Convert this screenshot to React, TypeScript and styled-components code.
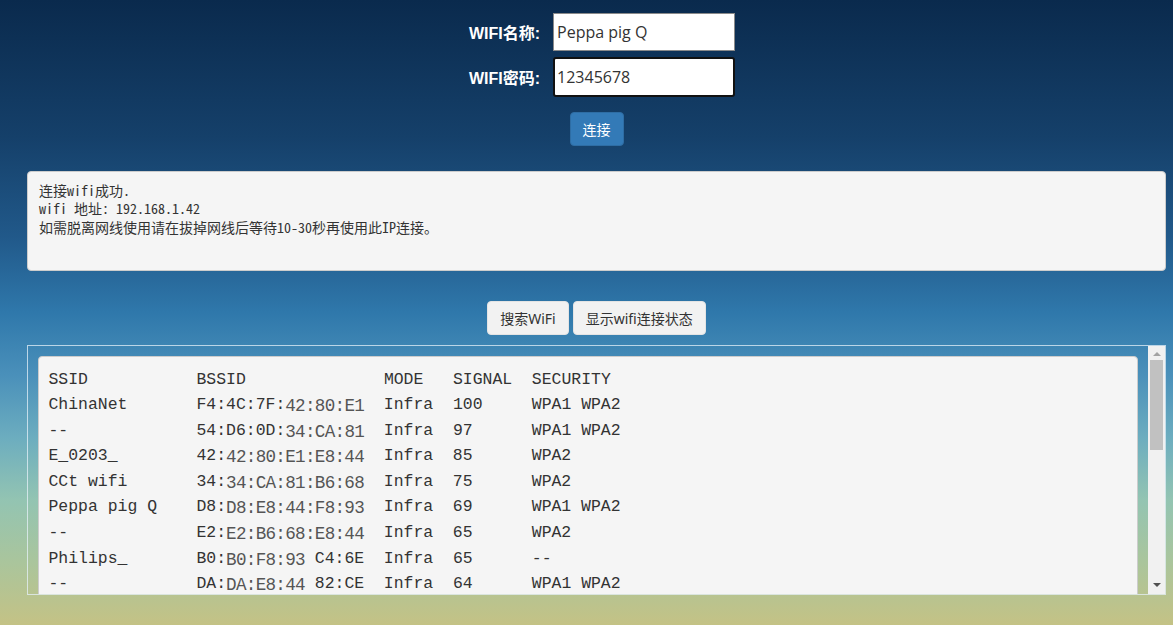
import React from "react";
import styled, { createGlobalStyle } from "styled-components";

const GlobalStyle = createGlobalStyle`
  html, body {
    margin: 0;
    height: 100%;
  }
  body {
    background: linear-gradient(
      to bottom,
      #0a2a4d 0%,
      #15406a 22%,
      #21598a 38%,
      #2f78ab 50%,
      #4a90ba 60%,
      #6cadbf 70%,
      #93c4b2 80%,
      #aac59c 90%,
      #c4c285 100%
    );
    font-family: "Noto Sans", "Noto Sans CJK SC", sans-serif;
    color: #333;
  }
`;

const Page = styled.div`
  height: 625px;
  box-sizing: border-box;
  padding: 13px 7px 0 27px;
  display: flex;
  flex-direction: column;
  overflow: hidden;
`;

const Form = styled.div`
  display: grid;
  grid-template-columns: auto 182px;
  column-gap: 13px;
  row-gap: 6px;
  justify-content: center;
  align-items: center;
  padding-left: 11px;
`;

const Label = styled.label`
  justify-self: end;
  color: #fff;
  font-family: "Liberation Sans", "Noto Sans CJK SC", sans-serif;
  font-weight: bold;
  font-size: 16px;
`;

const Field = styled.input<{ $focused?: boolean }>`
  box-sizing: border-box;
  width: 100%;
  height: ${(p) => (p.$focused ? "40px" : "38px")};
  margin: 0;
  padding: 0 ${(p) => (p.$focused ? "2px" : "3px")};
  background: #fff;
  color: #333;
  font-family: "Open Sans", "Noto Sans", sans-serif;
  font-size: 16px;
  border: ${(p) => (p.$focused ? "2px solid #111" : "1px solid #8a8a8a")};
  border-radius: ${(p) => (p.$focused ? "3px" : "0")};
  box-shadow: ${(p) => (p.$focused ? "inset 0 0 0 1px #fff" : "none")};
  outline: none;
`;

const ConnectRow = styled.div`
  display: flex;
  justify-content: center;
  margin-top: 15px;
`;

const Button = styled.button<{ $primary?: boolean }>`
  height: 34px;
  padding: 0 12px;
  font-family: "Noto Sans", "Noto Sans CJK SC", sans-serif;
  font-size: 14px;
  border-radius: 4px;
  cursor: pointer;
  color: ${(p) => (p.$primary ? "#fff" : "#333")};
  background: ${(p) => (p.$primary ? "#337ab7" : "#f2f2f2")};
  border: 1px solid ${(p) => (p.$primary ? "#2e6da4" : "#e4e4e4")};
`;

const StatusBox = styled.pre`
  margin: 25px 0 0;
  height: 100px;
  box-sizing: border-box;
  padding: 8.5px 11px;
  background: #f5f5f5;
  border: 1px solid #ccc;
  border-radius: 4px;
  font-family: "Noto Sans Mono CJK SC", "DejaVu Sans Mono", "Noto Sans CJK SC", monospace;
  font-size: 14px;
  line-height: 18.5px;
  color: #333;
  white-space: pre;
`;

const ToolRow = styled.div`
  display: flex;
  justify-content: center;
  gap: 4px;
  margin-top: 30px;
`;

const ListBox = styled.div`
  margin-top: 10px;
  height: 250px;
  box-sizing: border-box;
  border: 1px solid rgba(230, 240, 248, 0.75);
  display: flex;
`;

const ListViewport = styled.div`
  flex: 1;
  overflow: hidden;
  padding: 10px 10px 0 10px;
`;

const ListPre = styled.div`
  background: #f5f5f5;
  border: 1px solid #ccc;
  border-radius: 4px;
  padding: 9.5px;
  font-family: "Liberation Mono", "DejaVu Sans Mono", monospace;
  font-size: 16.45px;
  line-height: 25.6px;
  color: #333;
  white-space: pre;
`;

const Line = styled.div`
  height: 25.6px;
`;

const Patch = styled.span`
  display: inline-block;
  color: #555;
  font-size: 17.6px;
  letter-spacing: -0.7px;
  transform: translateY(2px);
`;

const ScrollBar = styled.div`
  width: 17px;
  background: #f1f1f1;
  display: flex;
  flex-direction: column;
  align-items: center;
`;

const Arrow = styled.div<{ $down?: boolean }>`
  width: 0;
  height: 0;
  margin: ${(p) => (p.$down ? "auto 0 7px" : "6px 0 4px")};
  border-left: 4px solid transparent;
  border-right: 4px solid transparent;
  border-bottom: ${(p) => (p.$down ? "none" : "4px solid #a3a3a3")};
  border-top: ${(p) => (p.$down ? "4px solid #505050" : "none")};
`;

const Thumb = styled.div`
  width: 13px;
  height: 90px;
  background: #c1c1c1;
`;

type Seg = [string, boolean];

const rows: { ssid: string; bssid: Seg[]; signal: string; sec: string }[] = [
  { ssid: "ChinaNet", bssid: [["F4:4C:7F:", false], ["42:80:E1", true]], signal: "100", sec: "WPA1 WPA2" },
  { ssid: "--", bssid: [["54:D6:0D:", false], ["34:CA:81", true]], signal: "97", sec: "WPA1 WPA2" },
  { ssid: "E_0203_", bssid: [["42:", false], ["42:80:E1:E8:44", true]], signal: "85", sec: "WPA2" },
  { ssid: "CCt wifi", bssid: [["34:", false], ["34:CA:81:B6:68", true]], signal: "75", sec: "WPA2" },
  { ssid: "Peppa pig Q", bssid: [["D8:", false], ["D8:E8:44:F8:93", true]], signal: "69", sec: "WPA1 WPA2" },
  { ssid: "--", bssid: [["E2:", false], ["E2:B6:68:E8:44", true]], signal: "65", sec: "WPA2" },
  { ssid: "Philips_", bssid: [["B0:", false], ["B0:F8:93", true], [" C4:6E", false]], signal: "65", sec: "--" },
  { ssid: "--", bssid: [["DA:", false], ["DA:E8:44", true], [" 82:CE", false]], signal: "64", sec: "WPA1 WPA2" },
];

export default function App() {
  return (
    <>
      <GlobalStyle />
      <Page>
        <Form>
          <Label>WIFI名称:</Label>
          <Field defaultValue="Peppa pig Q" readOnly />
          <Label>WIFI密码:</Label>
          <Field $focused defaultValue="12345678" readOnly />
        </Form>
        <ConnectRow>
          <Button $primary>连接</Button>
        </ConnectRow>
        <StatusBox>
          {"连接wifi成功.\nwifi 地址: 192.168.1.42\n如需脱离网线使用请在拔掉网线后等待10-30秒再使用此IP连接。"}
        </StatusBox>
        <ToolRow>
          <Button>搜索WiFi</Button>
          <Button>显示wifi连接状态</Button>
        </ToolRow>
        <ListBox>
          <ListViewport>
            <ListPre>
              <Line>{"SSID".padEnd(15) + "BSSID".padEnd(19) + "MODE".padEnd(7) + "SIGNAL".padEnd(8) + "SECURITY"}</Line>
              {rows.map((r, i) => (
                <Line key={i}>
                  {r.ssid.padEnd(15)}
                  {r.bssid.map(([t, p], j) => (p ? <Patch key={j}>{t}</Patch> : <span key={j}>{t}</span>))}
                  {"  " + "Infra".padEnd(7) + r.signal.padEnd(8) + r.sec}
                </Line>
              ))}
            </ListPre>
          </ListViewport>
          <ScrollBar>
            <Arrow />
            <Thumb />
            <Arrow $down />
          </ScrollBar>
        </ListBox>
      </Page>
    </>
  );
}
